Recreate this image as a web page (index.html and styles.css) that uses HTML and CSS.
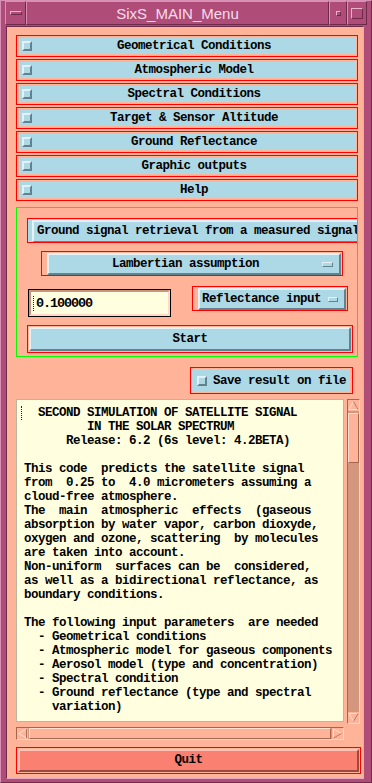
FILE: index.html
```html
<!DOCTYPE html>
<html lang="en">
<head>
    <meta charset="UTF-8">
    <meta name="viewport" content="width=device-width, initial-scale=1.0">
    <title>SixS_MAIN_Menu</title>
    <link rel="stylesheet" href="styles.css">
</head>
<body>

    <div class="window">
        <div class="titlebar">
            <div class="tb-box tb-menu"><span class="menu-bar"></span></div>
            <div class="tb-box tb-title">SixS_MAIN_Menu</div>
            <div class="tb-box tb-min"><span class="min-dot"></span></div>
            <div class="tb-box tb-max"><span class="max-box"></span></div>
        </div>

        <div class="client">
            <!-- main menu toggles -->
            <div class="menu-list">
                <div class="focus"><div class="toggle"><span class="check"></span><span class="label">Geometrical Conditions</span></div></div>
                <div class="focus"><div class="toggle"><span class="check"></span><span class="label">Atmospheric Model</span></div></div>
                <div class="focus"><div class="toggle"><span class="check"></span><span class="label">Spectral Conditions</span></div></div>
                <div class="focus"><div class="toggle"><span class="check"></span><span class="label">Target &amp; Sensor Altitude</span></div></div>
                <div class="focus"><div class="toggle"><span class="check"></span><span class="label">Ground Reflectance</span></div></div>
                <div class="focus"><div class="toggle"><span class="check"></span><span class="label">Graphic outputs</span></div></div>
                <div class="focus"><div class="toggle"><span class="check"></span><span class="label">Help</span></div></div>
            </div>

            <div class="panel">
                <div class="focus-ground">
                    <div class="ground-outer">
                        <div class="ground-btn">Ground signal retrieval from a measured signal</div>
                    </div>
                </div>

                <div class="focus-opt lamb">
                    <div class="opt">
                        <span class="opt-label">Lambertian assumption</span>
                        <span class="ind"></span>
                    </div>
                </div>

                <div class="input-row">
                    <div class="entry">
                        <div class="entry-in"><span class="entry-caret"></span>0.100000</div>
                    </div>
                    <div class="focus-opt refl">
                        <div class="opt opt-left">
                            <span>Reflectance input</span>
                            <span class="ind"></span>
                        </div>
                    </div>
                </div>

                <div class="focus-start">
                    <div class="bevel-btn">Start</div>
                </div>
            </div>

            <div class="focus save">
                <div class="save-btn"><span class="check"></span><span class="save-label">Save result on file</span></div>
            </div>

            <div class="textbox">
                <div class="text-area"><span class="caret"></span>  SECOND SIMULATION OF SATELLITE SIGNAL
         IN THE SOLAR SPECTRUM
      Release: 6.2 (6s level: 4.2BETA)

This code  predicts the satellite signal
from  0.25 to  4.0 micrometers assuming a
cloud-free atmosphere.
The  main  atmospheric  effects  (gaseous
absorption by water vapor, carbon dioxyde,
oxygen and ozone, scattering  by molecules
are taken into account.
Non-uniform  surfaces can be  considered,
as well as a bidirectional reflectance, as
boundary conditions.

The following input parameters  are needed
  - Geometrical conditions
  - Atmospheric model for gaseous components
  - Aerosol model (type and concentration)
  - Spectral condition
  - Ground reflectance (type and spectral
    variation)</div>

                <div class="vscroll">
                    <div class="arrow">
                        <svg width="11" height="11" viewBox="0 0 11 11"><polygon points="5.5,1.5 10,9.5 1,9.5" fill="#ffb398" stroke="#ffe2d4" stroke-width="1"/><line x1="5.5" y1="1.5" x2="10" y2="9.5" stroke="#b36f58"/></svg>
                    </div>
                    <div class="vthumb"></div>
                    <div class="trough"></div>
                    <div class="arrow">
                        <svg width="11" height="11" viewBox="0 0 11 11"><polygon points="1,1.5 10,1.5 5.5,9.5" fill="#ffb398" stroke="#ffe2d4" stroke-width="1"/><line x1="10" y1="1.5" x2="5.5" y2="9.5" stroke="#b36f58"/></svg>
                    </div>
                </div>

                <div class="hscroll">
                    <div class="arrow">
                        <svg width="11" height="11" viewBox="0 0 11 11"><polygon points="1.5,5.5 9.5,1 9.5,10" fill="#ffb398" stroke="#ffe2d4" stroke-width="1"/><line x1="9.5" y1="1" x2="9.5" y2="10" stroke="#b36f58"/></svg>
                    </div>
                    <div class="hthumb"></div>
                    <div class="arrow">
                        <svg width="11" height="11" viewBox="0 0 11 11"><polygon points="1.5,1 9.5,5.5 1.5,10" fill="#ffb398" stroke="#ffe2d4" stroke-width="1"/><line x1="9.5" y1="5.5" x2="1.5" y2="10" stroke="#b36f58"/></svg>
                    </div>
                </div>
            </div>

            <div class="focus-quit">
                <div class="quit-btn">Quit</div>
            </div>
        </div>
    </div>

</body>
</html>
```

FILE: styles.css
```css
* {
    box-sizing: border-box;
}

body {
    margin: 0;
    background-color: #b04c78;
    font-family: "Liberation Mono", "DejaVu Sans Mono", monospace;
    font-weight: bold;
    font-size: 12.5px;
    letter-spacing: -0.5px;
    color: #000;
}

/* window frame */
.window {
    width: 372px;
    height: 783px;
    display: flex;
    flex-direction: column;
    background-color: #b04c78;
    border: 1px solid;
    border-color: #d890b4 #6e2a4a #6e2a4a #d890b4;
    padding: 0 4px 3px 4px;
}

.titlebar {
    display: flex;
    height: 24px;
}

.tb-box {
    border: 1px solid;
    border-color: #d890b4 #6e2a4a #6e2a4a #d890b4;
    display: flex;
    align-items: center;
    justify-content: center;
}

.tb-menu {
    width: 21px;
}

.tb-title {
    flex: 1;
    font-family: "Liberation Sans", Arial, sans-serif;
    font-weight: normal;
    font-size: 15px;
    letter-spacing: 0;
    color: #f6dcea;
    padding-top: 1px;
}

.tb-min {
    width: 18px;
}

.tb-max {
    width: 20px;
}

.menu-bar {
    width: 12px;
    height: 4px;
    border: 1px solid;
    border-color: #eab0cc #6e2a4a #6e2a4a #eab0cc;
}

.min-dot {
    width: 5px;
    height: 5px;
    border: 1px solid;
    border-color: #eab0cc #6e2a4a #6e2a4a #eab0cc;
}

.max-box {
    width: 12px;
    height: 11px;
    border: 1px solid;
    border-color: #eab0cc #6e2a4a #6e2a4a #eab0cc;
}

.client {
    flex: 1;
    margin: 1px 3px 0 1px;
    background-color: #ffb398;
    border: 1px solid;
    border-color: #6e2a4a #e6a6c4 #e6a6c4 #6e2a4a;
    padding: 8px 2px 0 9px;
    display: flex;
    flex-direction: column;
    align-items: flex-start;
    white-space: nowrap;
}

/* menu toggles */
.menu-list {
    width: 342px;
    display: flex;
    flex-direction: column;
    gap: 2px;
}

.focus {
    border: 1px solid #ff0000;
    padding: 2px 1px 2px 2px;
}

.toggle {
    height: 16px;
    background-color: #add8e6;
    display: flex;
    align-items: center;
    padding-left: 3px;
}

.check {
    width: 10px;
    height: 10px;
    border: 2px solid;
    border-color: #e4f2f6 #62828e #62828e #e4f2f6;
    flex: none;
}

.label {
    flex: 1;
    text-align: center;
    line-height: 16px;
}

/* green panel */
.panel {
    margin-top: 6px;
    width: 342px;
    height: 150px;
    border: 1px solid #00ff00;
    padding: 10px 4px 3px 10px;
    overflow: hidden;
    display: flex;
    flex-direction: column;
    align-items: flex-start;
}

.focus-ground {
    border: 1px solid #ff0000;
    border-right: none;
    padding-top: 1px;
    flex: none;
    width: max-content;
}

.ground-outer {
    background-color: #add8e6;
    padding-left: 4px;
}

.ground-btn {
    height: 22px;
    line-height: 19px;
    border-top: 2px solid #e4f2f6;
    border-left: 2px solid #e4f2f6;
    border-bottom: 1px solid #62828e;
    padding: 0 20px 0 3px;
}

.focus-opt {
    border: 1px solid #ff0000;
    padding: 1px 1px 0 5px;
}

.lamb {
    margin-top: 8px;
    margin-left: 14px;
    width: 302px;
}

.opt {
    height: 22px;
    background-color: #add8e6;
    border: 2px solid;
    border-color: #e4f2f6 #62828e #62828e #e4f2f6;
    display: flex;
    align-items: center;
    padding-right: 6px;
}

.opt-label {
    flex: 1;
    text-align: center;
}

.opt-left {
    padding-left: 2px;
}

.ind {
    width: 11px;
    height: 5px;
    border: 1px solid;
    border-color: #e4f2f6 #62828e #62828e #e4f2f6;
    flex: none;
}

.opt-left .ind {
    margin-left: 7px;
    width: 10px;
}

.input-row {
    margin-top: 10px;
    display: flex;
    align-items: flex-start;
}

.entry {
    margin-left: 1px;
    margin-top: 3px;
    width: 143px;
    height: 28px;
    border: 1px solid #000;
}

.entry-in {
    height: 100%;
    background-color: #ffffe0;
    border: 2px solid;
    border-color: #c8967e #ffd8c8 #ffd8c8 #c8967e;
    padding-left: 2px;
    line-height: 21px;
    font-size: 13.5px;
    letter-spacing: -1.1px;
    display: flex;
    align-items: center;
}

.entry-caret {
    width: 2px;
    height: 15px;
    border-left: 1px dotted #222;
    margin-right: 1px;
}

.refl {
    margin-left: 21px;
    width: 156px;
}

.focus-start {
    margin-top: 8px;
    width: 326px;
    border: 1px solid #ff0000;
    padding: 1px;
}

.bevel-btn {
    height: 24px;
    background-color: #add8e6;
    border: 2px solid;
    border-color: #e4f2f6 #62828e #62828e #e4f2f6;
    text-align: center;
    line-height: 20px;
}

/* save toggle */
.save {
    align-self: flex-end;
    margin-top: 10px;
    margin-right: 8px;
    width: 163px;
    padding: 1px 2px 1px 1px;
}

.save-btn {
    height: 23px;
    background-color: #add8e6;
    display: flex;
    align-items: center;
    padding-left: 5px;
}

.save-label {
    margin-left: 6px;
}

/* text with scrollbars */
.textbox {
    margin-top: 5px;
    display: grid;
    grid-template-columns: 328px 13px;
    column-gap: 3px;
    row-gap: 3px;
}

.text-area {
    position: relative;
    height: 323px;
    background-color: #ffffe0;
    border: 1px solid #b9b79f;
    padding: 6px 0 0 7px;
    white-space: pre;
    line-height: 14px;
    overflow: hidden;
}

.caret {
    position: absolute;
    left: 4px;
    top: 6px;
    width: 3px;
    height: 14px;
    border-left: 1px dotted #222;
}

.vscroll {
    width: 13px;
    height: 325px;
    border: 1px solid;
    border-color: #a8664f #ffd6c6 #ffd6c6 #a8664f;
    background-color: #d4977e;
    display: flex;
    flex-direction: column;
}

.arrow {
    width: 11px;
    height: 11px;
    flex: none;
    background-color: #ffb398;
}

.arrow svg {
    display: block;
}

.vthumb {
    margin-top: 2px;
    height: 50px;
    background-color: #ffb398;
    border: 1px solid;
    border-color: #ffe0d0 #a8664f #a8664f #ffe0d0;
}

.trough {
    flex: 1;
}

.hscroll {
    height: 13px;
    border: 1px solid;
    border-color: #a8664f #ffd6c6 #ffd6c6 #a8664f;
    background-color: #d4977e;
    display: flex;
}

.hthumb {
    flex: 1;
    margin: 0 1px;
    background-color: #ffb398;
    border: 1px solid;
    border-color: #ffe0d0 #a8664f #a8664f #ffe0d0;
}

/* quit */
.focus-quit {
    margin-top: 7px;
    width: 345px;
    border: 1px solid #ff0000;
    padding: 1px;
}

.quit-btn {
    height: 23px;
    background-color: #fa8072;
    border: 2px solid;
    border-color: #ffc4b8 #9c4a40 #9c4a40 #ffc4b8;
    text-align: center;
    line-height: 19px;
}
```
